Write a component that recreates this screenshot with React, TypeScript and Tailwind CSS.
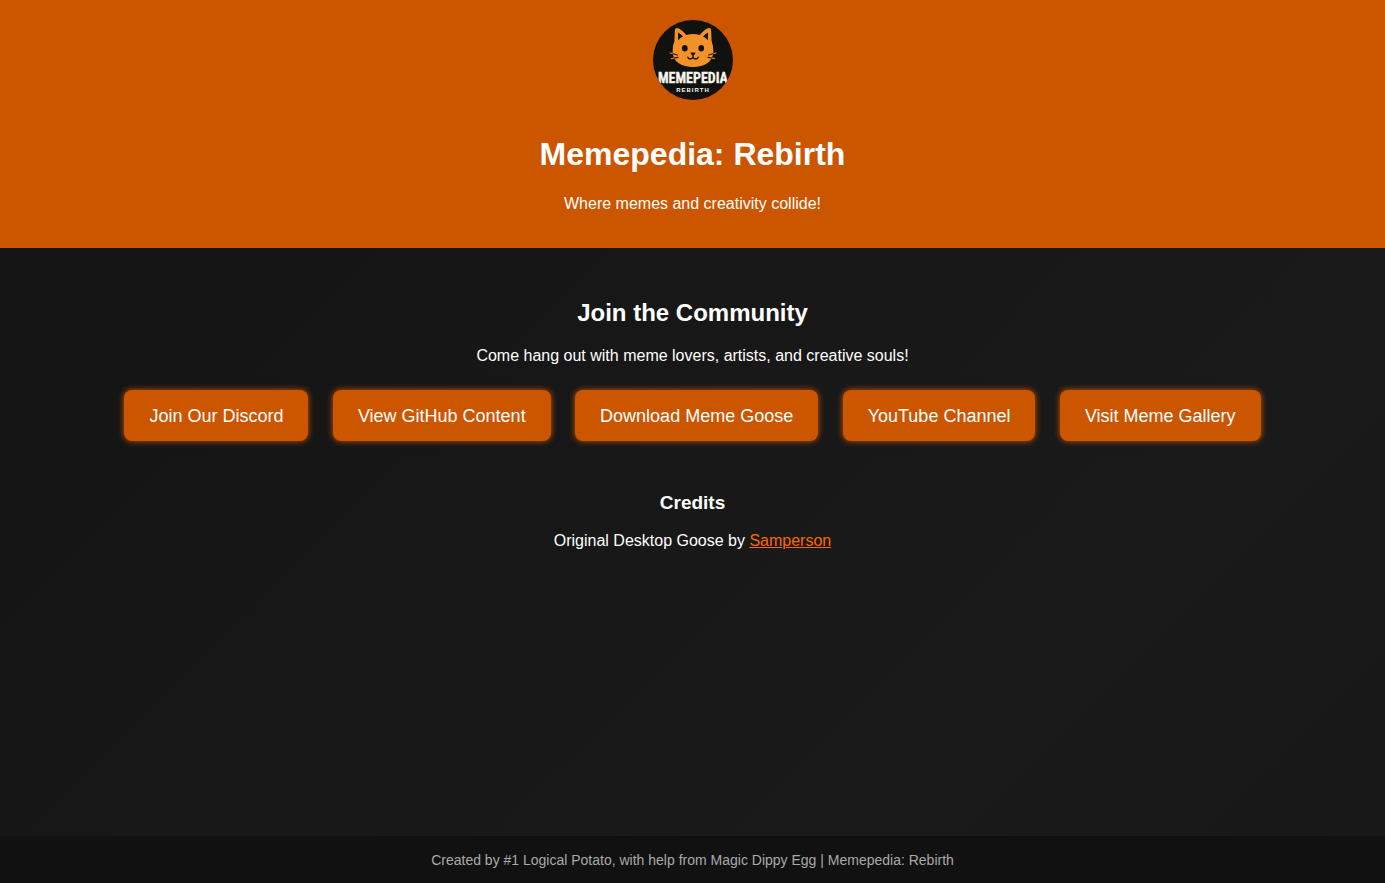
type LinkItem = { label: string; href: string };

const links: LinkItem[] = [
  { label: "Join Our Discord", href: "#discord" },
  { label: "View GitHub Content", href: "#github" },
  { label: "Download Meme Goose", href: "#goose" },
  { label: "YouTube Channel", href: "#youtube" },
  { label: "Visit Meme Gallery", href: "#gallery" },
];

function Logo() {
  return (
    <svg viewBox="0 0 80 80" className="block h-20 w-20" role="img" aria-label="Memepedia Rebirth logo">
      <defs>
        <clipPath id="logo-circle">
          <circle cx="40" cy="40" r="40" />
        </clipPath>
      </defs>
      <g clipPath="url(#logo-circle)">
        <rect width="80" height="80" fill="#11110f" />
        {/* Head with ears */}
        <path
          d="M21.8 11 Q22 6.6 26 8.6 Q30 11 33.4 15 Q40 13.2 46.6 15 Q50 11 54 8.6 Q58 6.6 58.2 11 L58.6 21 Q60.6 26 60.4 32 C60 42 51 47 40 47 C29 47 20 42 19.6 32 Q19.4 26 21.4 21 Z"
          fill="#f39228"
        />
        <path d="M25 12.4 Q27.8 13.8 30 16.6 Q27 17.6 25.2 20.4 Z" fill="#11110f" />
        <path d="M55 12.4 Q52.2 13.8 50 16.6 Q53 17.6 54.8 20.4 Z" fill="#11110f" />
        {/* Eyes, nose and mouth */}
        <ellipse cx="31.8" cy="28.3" rx="2.8" ry="3.2" fill="#11110f" />
        <ellipse cx="48.2" cy="28.3" rx="2.8" ry="3.2" fill="#11110f" />
        <path d="M37.4 32.6 H42.6 Q42.4 34.6 40 35.8 Q37.6 34.6 37.4 32.6 Z" fill="#11110f" />
        <path
          d="M40 35 V37 Q39.4 39 37.2 39 Q35.4 38.8 34.8 37.2 M40 37 Q40.6 39 42.8 39 Q44.6 38.8 45.2 37.2"
          fill="none"
          stroke="#11110f"
          strokeWidth="1.3"
          strokeLinecap="round"
        />
        {/* Whiskers */}
        <g fill="none" strokeWidth="1.1" strokeLinecap="round">
          <path d="M17 33 L20 33.8 M18.4 38.6 L21.4 38 M63 33 L60 33.8 M61.6 38.6 L58.6 38" stroke="#d58a35" />
          <path d="M20 33.8 L24.4 35 M21.4 38 L25 37.4 M60 33.8 L55.6 35 M58.6 38 L55 37.4" stroke="#11110f" />
        </g>
        <text
          x="40"
          y="63"
          textAnchor="middle"
          fill="#f8f5ee"
          stroke="#f8f5ee"
          strokeWidth="0.3"
          className="font-['Liberation_Sans_Narrow','Roboto_Condensed','Liberation_Sans',sans-serif] text-[14px] font-bold"
        >
          MEMEPEDIA
        </text>
        <text
          x="40"
          y="72"
          textAnchor="middle"
          fill="#f8f5ee"
          className="font-['Liberation_Sans',sans-serif] text-[6px] font-bold tracking-[1px]"
        >
          REBIRTH
        </text>
      </g>
    </svg>
  );
}

export default function App() {
  return (
    <div className="flex min-h-screen flex-col bg-[linear-gradient(135deg,#131313_2%,#1a1a1a_74%,#171717_106%)] text-center font-['Liberation_Sans',Arial,sans-serif] text-base leading-5 text-white">
      <header className="flex flex-col items-center bg-[#cc5500] px-5 pt-5 pb-[34px]">
        <Logo />
        <h1 className="mt-9 text-[32px] leading-9 font-bold">Memepedia: Rebirth</h1>
        <p className="mt-[22px]">Where memes and creativity collide!</p>
      </header>

      <main className="flex-1 px-5 py-[50px]">
        <section>
          <h2 className="text-2xl leading-[30px] font-bold">Join the Community</h2>
          <p className="mt-[18px]">Come hang out with meme lovers, artists, and creative souls!</p>
          <div className="mt-3.5">
            {links.map((link) => (
              <span key={link.label}>
                <a
                  href={link.href}
                  className="m-2.5 inline-block rounded-lg bg-[#cc5500] px-[25px] pt-4 pb-3.5 text-lg leading-[21px] shadow-[0_0_6px_#cc5500] transition-colors hover:bg-[#ff6600]"
                >
                  {link.label}
                </a>{" "}
              </span>
            ))}
          </div>
        </section>

        <section className="mt-10">
          <h3 className="text-[19px] leading-6 font-bold">Credits</h3>
          <p className="mt-4">
            Original Desktop Goose by{" "}
            <a href="#samperson" className="text-[#ff6600] underline">
              Samperson
            </a>
          </p>
        </section>
      </main>

      <footer className="bg-[#111111] px-5 pt-4 pb-3.5 text-sm leading-[17px] text-[#aaaaaa]">
        Created by #1 Logical Potato, with help from Magic Dippy Egg | Memepedia: Rebirth
      </footer>
    </div>
  );
}
